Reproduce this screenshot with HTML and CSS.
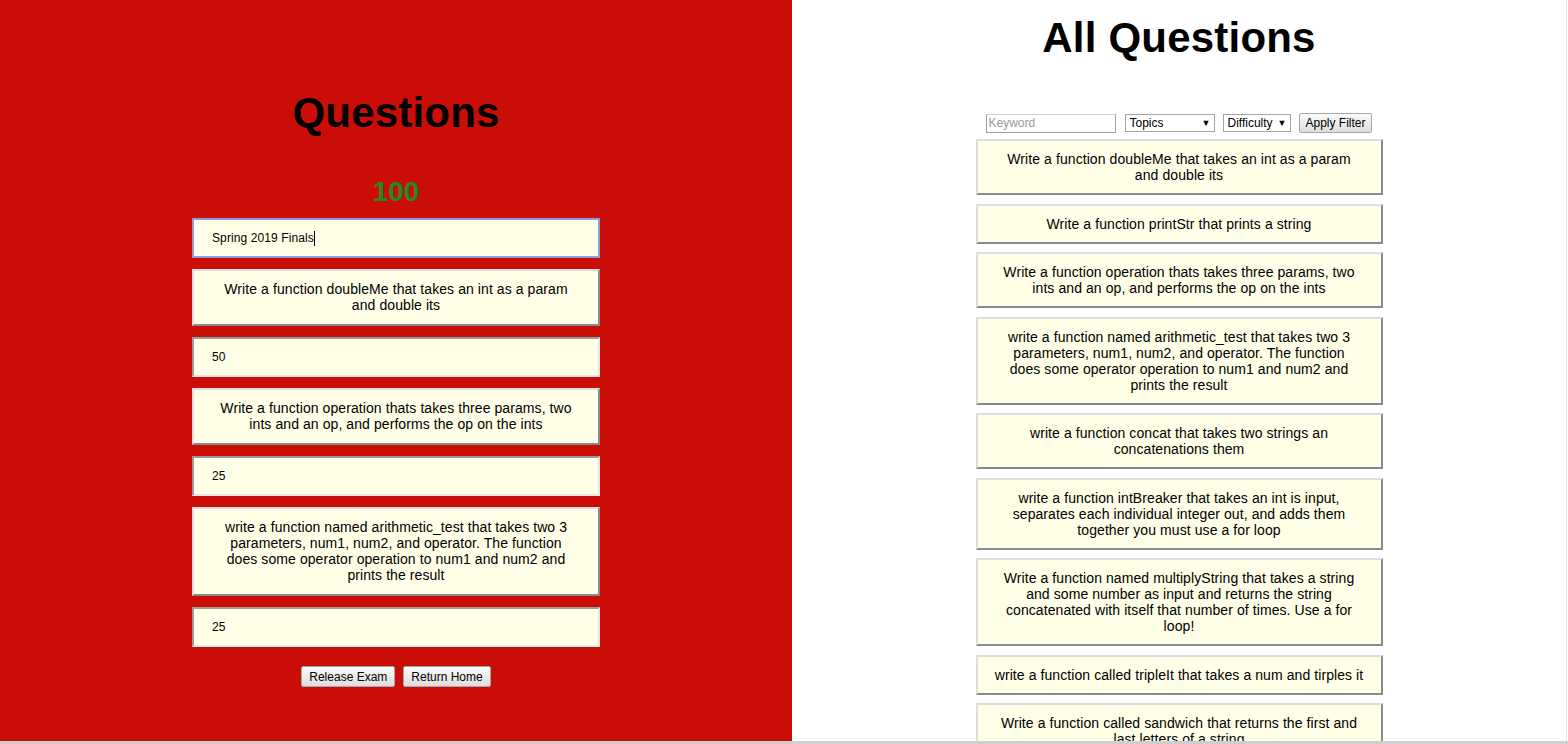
FILE: index.html
```html
<!DOCTYPE html>
<html>
<head>
<meta charset="utf-8">
<title>Questions</title>
<link rel="stylesheet" href="styles.css">
</head>
<body>
<div class="page">
  <section class="left">
    <h1 class="title">Questions</h1>
    <div class="score">100</div>
    <div class="stack">
      <div class="field focused">Spring 2019 Finals<span class="caret"></span></div>
      <div class="qbox qleft">Write a function doubleMe that takes an int as a param and double its</div>
      <div class="field">50</div>
      <div class="qbox qleft">Write a function operation thats takes three params, two ints and an op, and performs the op on the ints</div>
      <div class="field">25</div>
      <div class="qbox qleft tight">write a function named arithmetic_test that takes two 3 parameters, num1, num2, and operator. The function does some operator operation to num1 and num2 and prints the result</div>
      <div class="field">25</div>
    </div>
    <div class="actions">
      <button class="btn">Release Exam</button>
      <button class="btn">Return Home</button>
    </div>
  </section>
  <section class="right">
    <h1 class="title">All Questions</h1>
    <div class="filters">
      <input class="keyword" type="text" placeholder="Keyword">
      <div class="select sel-topics"><span>Topics</span><span class="arrow">▼</span></div>
      <div class="select sel-diff"><span>Difficulty</span><span class="arrow">▼</span></div>
      <button class="btn btn-filter">Apply Filter</button>
    </div>
    <div class="list">
      <div class="qbox">Write a function doubleMe that takes an int as a param and double its</div>
      <div class="qbox">Write a function printStr that prints a string</div>
      <div class="qbox">Write a function operation thats takes three params, two ints and an op, and performs the op on the ints</div>
      <div class="qbox tight">write a function named arithmetic_test that takes two 3 parameters, num1, num2, and operator. The function does some operator operation to num1 and num2 and prints the result</div>
      <div class="qbox">write a function concat that takes two strings an concatenations them</div>
      <div class="qbox">write a function intBreaker that takes an int is input, separates each individual integer out, and adds them together you must use a for loop</div>
      <div class="qbox">Write a function named multiplyString that takes a string and some number as input and returns the string concatenated with itself that number of times. Use a for loop!</div>
      <div class="qbox">write a function called tripleIt that takes a num and tirples it</div>
      <div class="qbox">Write a function called sandwich that returns the first and last letters of a string</div>
    </div>
  </section>
</div>
<div class="hbar"></div>
</body>
</html>
```

FILE: styles.css
```css
html, body {
  margin: 0;
  padding: 0;
  background: #ffffff;
  overflow: hidden;
}
body {
  font-family: "Liberation Sans", Arial, sans-serif;
  color: #000;
  width: 1568px;
  height: 744px;
}
.page {
  display: flex;
  height: 741px;
  overflow: hidden;
}
.left {
  flex: 0 0 792px;
  background: #cb0d07;
  display: flex;
  flex-direction: column;
  align-items: center;
  padding-top: 89px;
  box-sizing: border-box;
}
.right {
  flex: 0 0 775px;
  border-right: 1px solid #e6e6e6;
  box-sizing: border-box;
  display: flex;
  flex-direction: column;
  align-items: center;
  padding-top: 14px;
  overflow: hidden;
}
.title {
  margin: 0;
  font-size: 42px;
  line-height: 48px;
  font-weight: bold;
  letter-spacing: 0.2px;
}
.score {
  margin-top: 39px;
  font-size: 28px;
  line-height: 32px;
  font-weight: bold;
  color: #228a22;
}
.stack {
  margin-top: 10px;
  width: 408px;
  display: flex;
  flex-direction: column;
  gap: 11px;
}
.field {
  box-sizing: border-box;
  height: 40px;
  background: #fffee6;
  border: 2px solid;
  border-color: #9a9a9a #e4e4e4 #e4e4e4 #9a9a9a;
  padding: 0 18px;
  font-size: 12px;
  letter-spacing: 0.1px;
  display: flex;
  align-items: center;
}
.field.focused {
  border-color: #8f9ad8;
}
.caret {
  display: inline-block;
  width: 1px;
  height: 15px;
  background: #000;
}
.qbox {
  box-sizing: border-box;
  width: 407px;
  background: #fffee6;
  border: 2px solid;
  border-color: #dedede #8a8a8a #8a8a8a #dedede;
  padding: 10px 17px;
  font-size: 14px;
  line-height: 16px;
  letter-spacing: 0.08px;
  text-align: center;
}
.qleft {
  width: 408px;
  padding-bottom: 11px;
}
.tight {
  padding-left: 21px;
  padding-right: 21px;
}
.actions {
  margin-top: 19px;
  display: flex;
  gap: 8px;
}
.btn {
  font-family: "Liberation Sans", Arial, sans-serif;
  font-size: 12px;
  height: 21px;
  padding: 0 7px;
  border: 1px solid #a7a7a7;
  border-radius: 2px;
  background: linear-gradient(#fbfbfb, #dddddd);
  color: #000;
}
.filters {
  margin-top: 51px;
  display: flex;
  align-items: center;
}
.keyword {
  box-sizing: border-box;
  width: 130px;
  height: 19px;
  border: 1px solid #a0a0a0;
  border-top-color: #d0d0d0;
  padding: 0 1px;
  font-family: "Liberation Sans", Arial, sans-serif;
  font-size: 12px;
  margin-right: 9px;
}
.keyword::placeholder {
  color: #9a9a9a;
}
.select {
  box-sizing: border-box;
  height: 18px;
  border: 1px solid #a5a5a5;
  background: #fff;
  font-size: 12px;
  display: flex;
  align-items: center;
  justify-content: space-between;
  padding: 0 4px 0 3px;
}
.arrow {
  font-size: 9px;
}
.sel-topics {
  width: 90px;
  margin-right: 8px;
}
.sel-diff {
  width: 68px;
  margin-right: 8px;
}
.btn-filter {
  height: 20px;
  padding: 0 5px;
}
.list {
  margin-top: 6px;
  display: flex;
  flex-direction: column;
  gap: 8.5px;
}
.hbar {
  height: 3px;
  background: #cfcfcf;
}
```
